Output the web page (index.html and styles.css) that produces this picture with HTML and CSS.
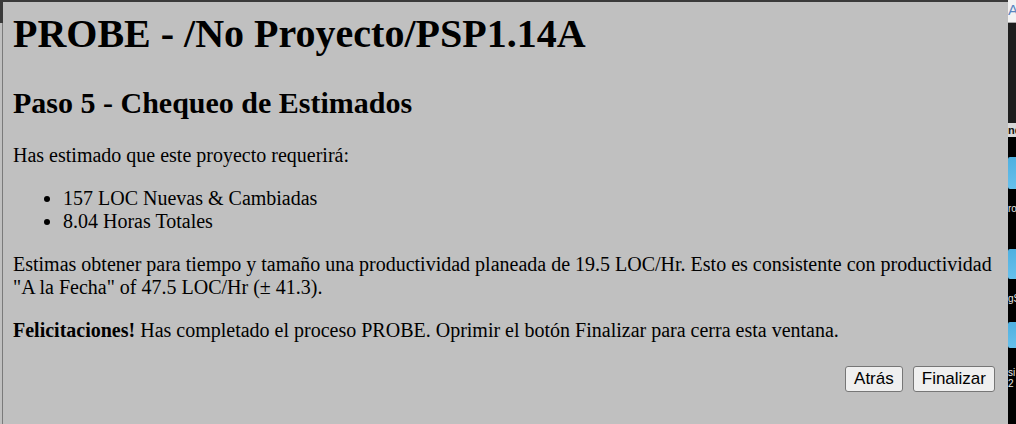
FILE: index.html
```html
<!DOCTYPE html>
<html lang="es">
<head>
<meta charset="utf-8">
<title>PROBE</title>
<link rel="stylesheet" href="styles.css">
</head>
<body>
<div class="screen">
  <div class="edge"><div class="edge-dark"></div></div>
  <div class="win">
    <h1>PROBE - /No Proyecto/PSP1.14A</h1>
    <h2>Paso 5 - Chequeo de Estimados</h2>
    <p>Has estimado que este proyecto requerirá:</p>
    <ul>
      <li>157 LOC Nuevas &amp; Cambiadas</li>
      <li>8.04 Horas Totales</li>
    </ul>
    <p>Estimas obtener para tiempo y tamaño una productividad planeada de 19.5 LOC/Hr. Esto es consistente con productividad "A la Fecha" of 47.5 LOC/Hr (± 41.3).</p>
    <p><b>Felicitaciones!</b> Has completado el proceso PROBE. Oprimir el botón Finalizar para cerra esta ventana.</p>
    <div class="actions">
      <button class="btn" type="button">Atrás</button>
      <button class="btn" type="button">Finalizar</button>
    </div>
  </div>
  <div class="side">
    <div class="s-top">A</div>
    <div class="s-dark"></div>
    <div class="s-light">nd</div>
    <div class="s-black h20"></div>
    <div class="s-blue h32"></div>
    <div class="s-black h15"></div>
    <div class="s-text h8">ro</div>
    <div class="s-black h37"></div>
    <div class="s-blue h30"></div>
    <div class="s-black h15"></div>
    <div class="s-text h10">gS</div>
    <div class="s-black h18"></div>
    <div class="s-blue h26"></div>
    <div class="s-black h20"></div>
    <div class="s-text h11">si</div>
    <div class="s-text h11">2</div>
    <div class="s-black grow"></div>
  </div>
</div>
</body>
</html>
```

FILE: styles.css
```css
html, body {
  margin: 0;
  padding: 0;
  background: #c0c0c0;
}
.screen {
  display: flex;
  width: 1016px;
  height: 424px;
  overflow: hidden;
}
.edge {
  width: 2px;
  flex: none;
  background: #c0c0c0;
}
.edge-dark {
  width: 3px;
  height: 23px;
  background: #3a3a3a;
  position: relative;
  z-index: 2;
}
.win {
  width: 982px;
  flex: none;
  background: #c0c0c0;
  border-top: 2px solid #3a3a3a;
  border-left: 1px solid #7a7a7a;
  padding: 9px 13px 0 10px;
  font-family: "Liberation Serif", "Times New Roman", serif;
  color: #000;
}
h1 {
  font-size: 40px;
  line-height: 46px;
  font-weight: bold;
  margin: 0 0 29px;
}
h2 {
  font-size: 30px;
  line-height: 34px;
  font-weight: bold;
  margin: 0 0 24px;
}
p {
  font-size: 20px;
  line-height: 23px;
  margin: 0 0 20px;
}
ul {
  font-size: 20px;
  line-height: 23px;
  margin: 0 0 20px;
  padding-left: 50px;
}
.actions {
  display: flex;
  justify-content: flex-end;
  gap: 10px;
  padding-top: 4px;
}
.btn {
  font-family: "Liberation Sans", Arial, sans-serif;
  font-size: 17px;
  height: 26px;
  padding: 0 8px;
  background: #efefef;
  color: #000;
  border: 1px solid #767676;
  border-radius: 3px;
}
.side {
  width: 8px;
  flex: none;
  display: flex;
  flex-direction: column;
  background: #000;
  font-family: "Liberation Sans", Arial, sans-serif;
  overflow: hidden;
}
.s-top {
  height: 22px;
  flex: none;
  background: #f3f3f3;
  border-bottom: 1px solid #a8a8a8;
  color: #5a86c0;
  font-size: 15px;
  line-height: 20px;
}
.s-dark {
  height: 100px;
  flex: none;
  background: #1e1e1e;
}
.s-light {
  height: 14px;
  flex: none;
  background: #d8d8d8;
  color: #111;
  font-size: 11px;
  line-height: 14px;
  font-weight: bold;
}
.s-black { background: #000; flex: none; }
.s-blue {
  flex: none;
  background: linear-gradient(#4fb0e0, #67c0ec);
  border-radius: 2px 0 0 2px;
}
.s-text {
  flex: none;
  background: #000;
  color: #e8e8e8;
  font-size: 10px;
  line-height: 10px;
  overflow: hidden;
}
.h8 { height: 8px; }
.h10 { height: 10px; }
.h11 { height: 11px; }
.h15 { height: 15px; }
.h18 { height: 18px; }
.h20 { height: 20px; }
.h26 { height: 26px; }
.h30 { height: 30px; }
.h32 { height: 32px; }
.h37 { height: 37px; }
.grow { flex: 1; }
```
